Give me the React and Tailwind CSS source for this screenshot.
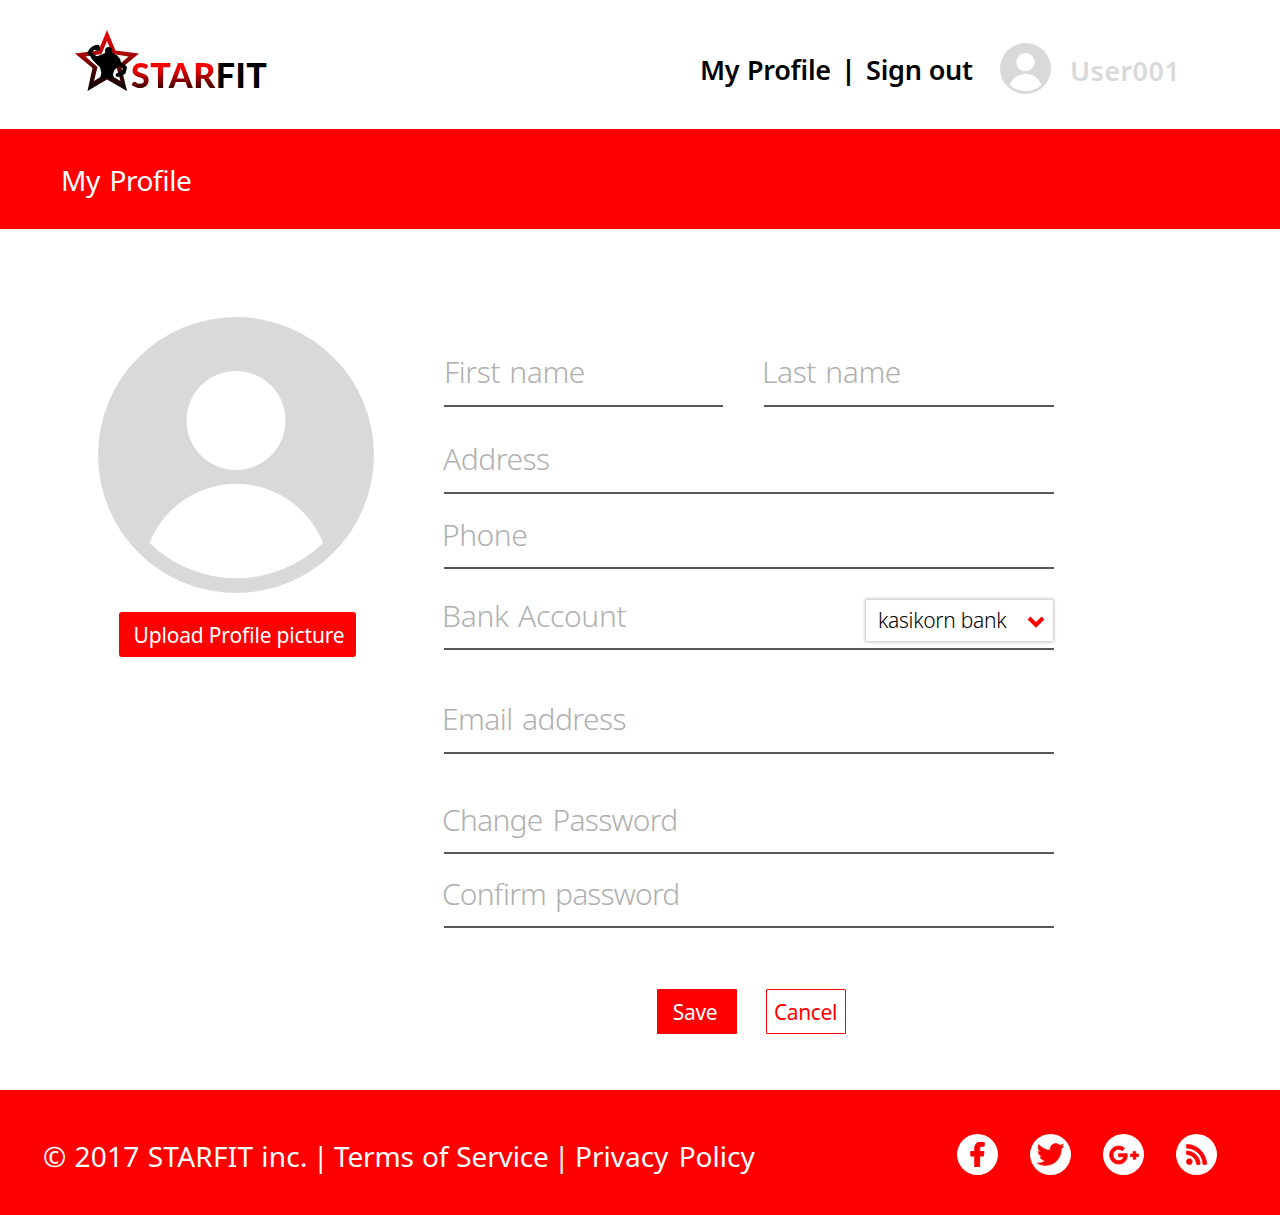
import React from "react";
import { FaFacebookF, FaTwitter, FaGooglePlusG, FaRss } from "react-icons/fa";

function Avatar({ className }) {
  return (
    <svg viewBox="0 0 276 276" className={className} aria-hidden="true">
      <circle cx="138" cy="138" r="138" fill="#d9d9d9" />
      <circle cx="138" cy="103.5" r="49.5" fill="#fff" />
      <path d="M51.5 226A93.2 93.2 0 0 1 225 226A124.4 124.4 0 0 1 51.5 226Z" fill="#fff" />
    </svg>
  );
}

function Logo() {
  return (
    <div className="flex items-start">
      <svg width="65" height="62" viewBox="0 0 65 62" aria-hidden="true">
        <defs>
          <linearGradient id="star" x1="0" y1="0" x2="0" y2="1">
            <stop offset="0" stopColor="#f00000" />
            <stop offset="0.35" stopColor="#b80808" />
            <stop offset="0.65" stopColor="#4a0505" />
            <stop offset="1" stopColor="#080000" />
          </linearGradient>
        </defs>
        <path
          fill="url(#star)"
          fillRule="evenodd"
          d="M32 0L40.5 20.5L64 23.5L46.500 38L52 61L32 49.5L12.500 61L17.500 38L0 23.500L23.500 20.500ZM32 11L26.500 24L10.500 26.500L22.500 37L19 51L32 43L45.500 51L41.500 37L53.500 26.500L37.500 24Z"
        />
        <g transform="translate(-10 -10) scale(0.33333)" fill="#000">
          <path d="M96 81Q82 82 73 99L92 115" fill="none" stroke="#000" strokeWidth="12" strokeLinejoin="round" />
          <ellipse cx="97" cy="83" rx="8" ry="9" />
          <ellipse cx="131" cy="93" rx="11" ry="12" />
          <path d="M80 104L97 109L120 99L142 99L156 106L166 118L168 132L158 142L148 150L144 163L148 180L126 173L104 181L109 158L105 142L92 130L78 114Z" />
          <path d="M160 128L180 143L176 157L158 165" fill="none" stroke="#000" strokeWidth="12" strokeLinejoin="round" strokeLinecap="round" />
        </g>
      </svg>
      <div className="-ml-[9px] mt-[25px] flex font-[Lato] text-[34px] leading-[40px] font-black tracking-[0.5px]">
        <span className="bg-linear-to-b from-[#f80000] from-35% to-[#3a0000] to-85% bg-clip-text text-transparent">STAR</span>
        <span className="text-black">FIT</span>
      </div>
    </div>
  );
}

function Field({ label, className = "", labelClass = "", children }) {
  return (
    <div className={`flex h-14 items-start justify-between border-b-2 border-[#58585a] ${className}`}>
      <span className={`text-[30px] leading-[40px] font-light whitespace-nowrap text-[#b0b0b0] ${labelClass}`}>{label}</span>
      {children}
    </div>
  );
}

function Social({ icon: Icon, size, className }) {
  return (
    <a className="flex size-[41px] items-center justify-center rounded-full bg-white text-[#f00]">
      <Icon size={size} className={className} />
    </a>
  );
}

export default function App() {
  return (
    <div className="h-[1215px] w-[1280px] overflow-hidden bg-white font-['Noto_Sans',sans-serif] [font-feature-settings:'liga']">
      <header className="flex h-[129px] items-start pl-[75px]">
        <div className="mt-[30px] w-[625px]">
          <Logo />
        </div>
        <nav className="mt-[50px] flex text-[27px] leading-[40px] font-semibold whitespace-nowrap text-black">
          <span className="w-[141px] tracking-[-0.3px] [word-spacing:1px]">My Profile</span>
          <span className="w-[25px] font-bold">|</span>
          <span className="w-[134px] tracking-[-0.2px]">Sign out</span>
        </nav>
        <Avatar className="mt-[43px] size-[51px]" />
        <span className="mt-[51px] ml-[19px] text-[27px] leading-[40px] font-semibold tracking-[0.4px] text-[#d9d9d9]">User001</span>
      </header>

      <div className="h-[100px] bg-[#f00] pt-[31px] pl-[61px] text-[28px] leading-[40px] tracking-[-0.5px] text-white [word-spacing:3px]">
        My Profile
      </div>

      <main className="flex h-[861px] items-start">
        <section className="mt-[88px] ml-[98px] flex w-[346px] flex-col items-start">
          <Avatar className="size-[276px]" />
          <button className="mt-[19px] ml-[21px] h-[45px] w-[237px] rounded-[3px] bg-[#f00] pt-0.5 pl-[3px] text-[21px] tracking-[-0.18px] whitespace-nowrap text-white">
            Upload Profile picture
          </button>
        </section>

        <form className="mt-[122px] w-[610px]">
          <div className="flex justify-between">
            <Field label="First name" className="w-[279px]" labelClass="mt-px tracking-[-0.45px] [word-spacing:2px]" />
            <Field label="Last name" className="w-[290px]" labelClass="mt-px -ml-[2px] tracking-[-0.45px] [word-spacing:2px]" />
          </div>
          <Field label="Address" className="mt-[31px]" labelClass="mt-px -ml-px tracking-[-0.5px]" />
          <Field label="Phone" className="mt-[19px]" labelClass="mt-0.5 -ml-[2px] tracking-[-0.5px]" />
          <Field label="Bank Account" className="mt-[25px]" labelClass="mt-0.5 -ml-[2px] tracking-[-0.3px] [word-spacing:2px]">
            <div className="mt-[6px] mr-px flex h-[41px] w-[187px] items-center justify-between bg-white pr-2 pl-3 text-[21px] font-light text-black shadow-[0_0_3px_1px_rgba(0,0,0,0.25)]">
              <span className="tracking-[-0.3px]">kasikorn bank</span>
              <svg width="18" height="14" viewBox="0 0 18 14" className="mt-0.5">
                <path d="M2 3L9 10L16 3" fill="none" stroke="#f00" strokeWidth="4" />
              </svg>
            </div>
          </Field>
          <Field label="Email address" className="mt-[48px]" labelClass="mt-px -ml-[2px] tracking-[-0.55px] [word-spacing:2px]" />
          <Field label="Change Password" className="mt-[44px]" labelClass="mt-0.5 -ml-[2px] tracking-[-0.75px] [word-spacing:3px]" />
          <Field label="Confirm password" className="mt-[18px]" labelClass="mt-0.5 -ml-[2px] tracking-[-0.85px] [word-spacing:2px]" />
          <div className="mt-[61px] ml-[213px] flex gap-[29px] text-[21px]">
            <button type="button" className="h-[45px] w-20 rounded-[1px] bg-[#f00] pt-0.5 pr-1 tracking-[-0.3px] text-white">Save</button>
            <button type="button" className="h-[45px] w-20 rounded-[1px] border border-[#f00] pt-0.5 pr-px tracking-[-0.4px] text-[#f00]">Cancel</button>
          </div>
        </form>
      </main>

      <footer className="flex h-[125px] items-start justify-between bg-[#f00] pr-[63px] pl-[43px]">
        <div className="mt-[46px] flex text-[28px] leading-[40px] whitespace-nowrap text-white">
          <span className="w-[270px] tracking-[0.25px] [word-spacing:0.5px]">© 2017 STARFIT inc.</span>
          <span className="w-[21px]">|</span>
          <span className="w-[220px] tracking-[-0.15px] [word-spacing:1px]">Terms of Service</span>
          <span className="w-[21px]">|</span>
          <span className="[word-spacing:3px]">Privacy Policy</span>
        </div>
        <div className="mt-11 flex gap-[32px]">
          <Social icon={FaFacebookF} size={25} className="-mt-px mr-px [stroke-width:20px]" />
          <Social icon={FaTwitter} size={27} className="[stroke-width:10px]" />
          <Social icon={FaGooglePlusG} size={30} className="[stroke-width:16px]" />
          <Social icon={FaRss} size={23} className="[stroke-width:18px]" />
        </div>
      </footer>
    </div>
  );
}
